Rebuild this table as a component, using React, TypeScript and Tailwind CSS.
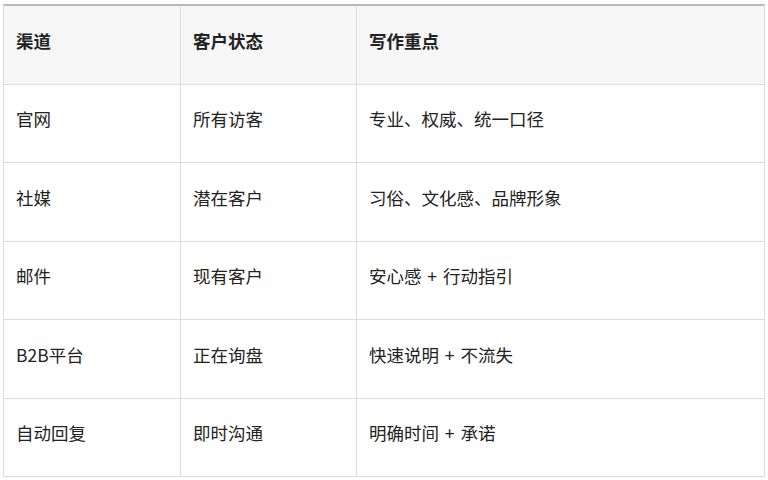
import React from "react";

const rows: { c: [string, string, string]; h: string }[] = [
  { c: ["官网", "所有访客", "专业、权威、统一口径"], h: "h-[78px] border-b" },
  { c: ["社媒", "潜在客户", "习俗、文化感、品牌形象"], h: "h-[79px] border-b" },
  { c: ["邮件", "现有客户", "安心感\u2004+\u2004行动指引"], h: "h-[78px] border-b" },
  { c: ["B2B平台", "正在询盘", "快速说明\u2004+\u2004不流失"], h: "h-[79px] border-b" },
  { c: ["自动回复", "即时沟通", "明确时间\u2004+\u2004承诺"], h: "h-[77px]" },
];

export default function App() {
  return (
    <div
      className="w-[768px] h-[480px] bg-white pt-[4px] pl-[3px] overflow-hidden text-[#222]"
      style={{ fontFamily: '"Noto Sans CJK SC", "Noto Sans", sans-serif' }}
    >
      <div className="w-[762px] border-t-2 border-t-[#b9b9b9] border-l border-r border-b border-[#dcdcdc]">
        <div className="flex h-[79px] bg-[#f6f6f6] border-b border-[#dcdcdc] text-[17.5px] font-bold">
          <div className="w-[177px] border-r border-[#dcdcdc] pl-[12px] flex items-center pb-[7px]">渠道</div>
          <div className="w-[176px] border-r border-[#dcdcdc] pl-[12px] flex items-center pb-[7px]">客户状态</div>
          <div className="flex-1 pl-[12px] flex items-center pb-[7px]">写作重点</div>
        </div>
        {rows.map((r, i) => (
          <div key={i} className={`flex text-[17.5px] border-[#dcdcdc] ${r.h}`}>
            <div className="w-[177px] border-r border-[#dcdcdc] pl-[12px] flex items-center pb-[8px]">{r.c[0]}</div>
            <div className="w-[176px] border-r border-[#dcdcdc] pl-[12px] flex items-center pb-[8px]">{r.c[1]}</div>
            <div className="flex-1 pl-[12px] flex items-center pb-[8px]">{r.c[2]}</div>
          </div>
        ))}
      </div>
    </div>
  );
}
